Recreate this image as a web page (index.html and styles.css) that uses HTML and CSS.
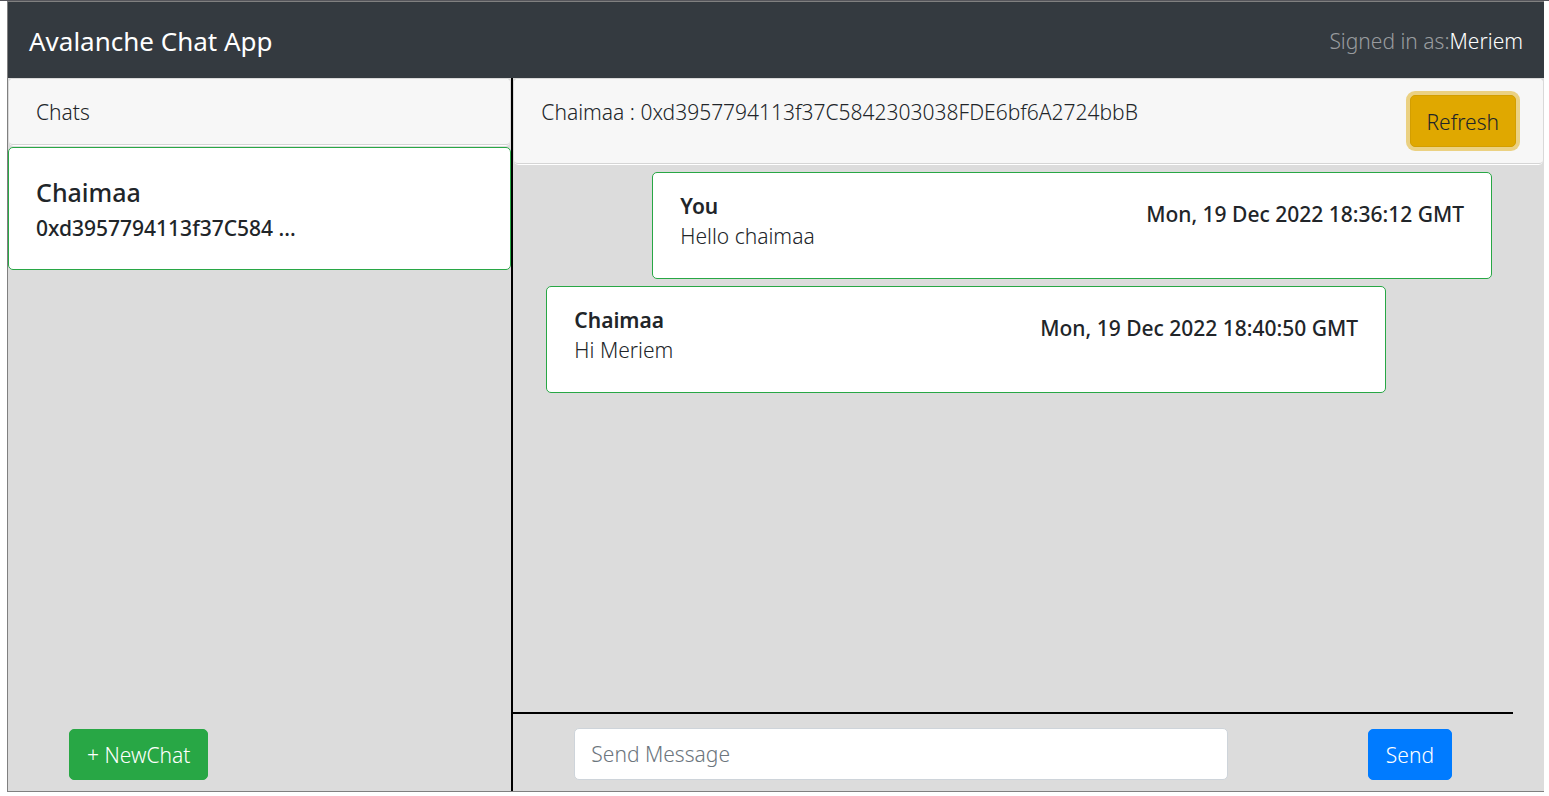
FILE: index.html
```html
<!DOCTYPE html>
<html lang="en">
<head>
<meta charset="utf-8">
<title>Avalanche Chat App</title>
<link rel="stylesheet" href="styles.css">
</head>
<body>
<div class="app">
  <header class="navbar">
    <a class="brand" href="#">Avalanche Chat App</a>
    <p class="account">Signed in as:<a href="#">Meriem</a></p>
  </header>
  <main class="workspace">
    <aside class="sidebar">
      <div class="card"><div class="card-header">Chats</div></div>
      <a class="contact" href="#">
        <h2 class="contact-name">Chaimaa</h2>
        <p class="contact-key">0xd3957794113f37C584 ...</p>
      </a>
      <div class="sidebar-footer">
        <button class="button button-success" type="button">+ NewChat</button>
      </div>
    </aside>
    <section class="conversation">
      <div class="card">
        <div class="card-header">
          <span>Chaimaa : 0xd3957794113f37C5842303038FDE6bf6A2724bbB</span>
          <button class="button button-warning" type="button">Refresh</button>
        </div>
      </div>
      <div class="messages">
        <article class="message message-own">
          <div><h3 class="author">You</h3><p class="text">Hello chaimaa</p></div>
          <time class="time">Mon, 19 Dec 2022 18:36:12 GMT</time>
        </article>
        <article class="message">
          <div><h3 class="author">Chaimaa</h3><p class="text">Hi Meriem</p></div>
          <time class="time">Mon, 19 Dec 2022 18:40:50 GMT</time>
        </article>
      </div>
      <form class="composer">
        <input class="composer-input" type="text" placeholder="Send Message" aria-label="Send Message">
        <button class="button button-primary" type="button">Send</button>
      </form>
    </section>
  </main>
</div>
</body>
</html>
```
FILE: styles.css
```css
* {
  box-sizing: border-box;
}

body {
  display: flex;
  min-height: 100vh;
  margin: 0;
  padding: 0 5px 4px 7px;
  border-top: 1px solid #55555b;
  background: #fff;
  color: #212529;
  font: 340 21px/30px "Segoe UI", "Noto Sans", sans-serif;
}

h2, h3, p {
  margin: 0;
}

a {
  color: inherit;
  text-decoration: none;
}

.app {
  display: flex;
  flex: 1;
  flex-direction: column;
  border: 1px solid #808080;
  border-right: 0;
  background: #dcdcdc;
}

.navbar {
  display: flex;
  align-items: center;
  justify-content: space-between;
  padding: 21px 21px 19px;
  background: #343a40;
  color: #fff;
}

.brand {
  font-size: 26px;
  font-weight: 380;
  line-height: 36px;
}

.account {
  color: #999c9f;
}

.account a {
  color: #fff;
  font-weight: 360;
}

.workspace {
  display: flex;
  flex: 1;
}

.sidebar {
  display: flex;
  flex: 0 0 32.9%;
  flex-direction: column;
  border-right: 2px solid #000;
}

.card {
  padding-bottom: 1px;
  border: 1px solid #d9d9d9;
  border-bottom: 0;
  border-radius: 5px;
  background: #fff;
}

.card-header {
  display: flex;
  align-items: flex-start;
  justify-content: space-between;
  padding: 18px 27px 17px;
  border-bottom: 1px solid #d5d5d5;
  border-radius: 4px;
  background: #f7f7f7;
}

.contact {
  margin-top: 1px;
  padding: 27px 27px 26px;
  border: 1px solid #28a745;
  border-radius: 5px;
  background: #fff;
}

.contact-name {
  margin-bottom: 4px;
  font-size: 25px;
  font-weight: 500;
  line-height: 34px;
}

.contact-key,
.time {
  font-weight: 460;
}

.sidebar-footer {
  margin-top: auto;
  padding: 0 61px 11px;
}

.button {
  padding: 10px 17px 9px;
  border: 1px solid transparent;
  border-radius: 5px;
  color: #fff;
  font: inherit;
  cursor: pointer;
}

.button-success {
  border-color: #28a745;
  background: #28a745;
}

.button-primary {
  border-color: #007bff;
  background: #007bff;
}

.button-warning {
  margin: -2px 0 -1px;
  padding: 11px 16px 9px;
  border-color: #d39e00;
  background: #e0a800;
  box-shadow: 0 0 0 4px #ebd182;
  color: #212529;
}

.conversation {
  display: flex;
  flex: 1;
  flex-direction: column;
}

.messages {
  display: flex;
  flex: 1;
  flex-direction: column;
  gap: 7px;
  width: 97%;
  padding: 7px 21px 7px 33px;
  border-bottom: 2px solid #000;
}

.message {
  display: flex;
  justify-content: space-between;
  width: 88.8%;
  padding: 18px 27px 27px;
  border: 1px solid #28a745;
  border-radius: 5px;
  background: #fff;
}

.message-own {
  align-self: flex-end;
}

.author {
  font-size: 21px;
  font-weight: 650;
}

.time {
  padding-top: 8px;
}

.composer {
  display: flex;
  align-items: flex-end;
  justify-content: space-between;
  padding: 14px 92px 11px 61px;
}

.composer-input {
  width: 74.5%;
  padding: 10px 16px;
  border: 1px solid #ced4da;
  border-radius: 5px;
  background: #fff;
  color: #495057;
  font: inherit;
}

.composer-input::placeholder {
  color: #6c757d;
  opacity: 1;
}
```
